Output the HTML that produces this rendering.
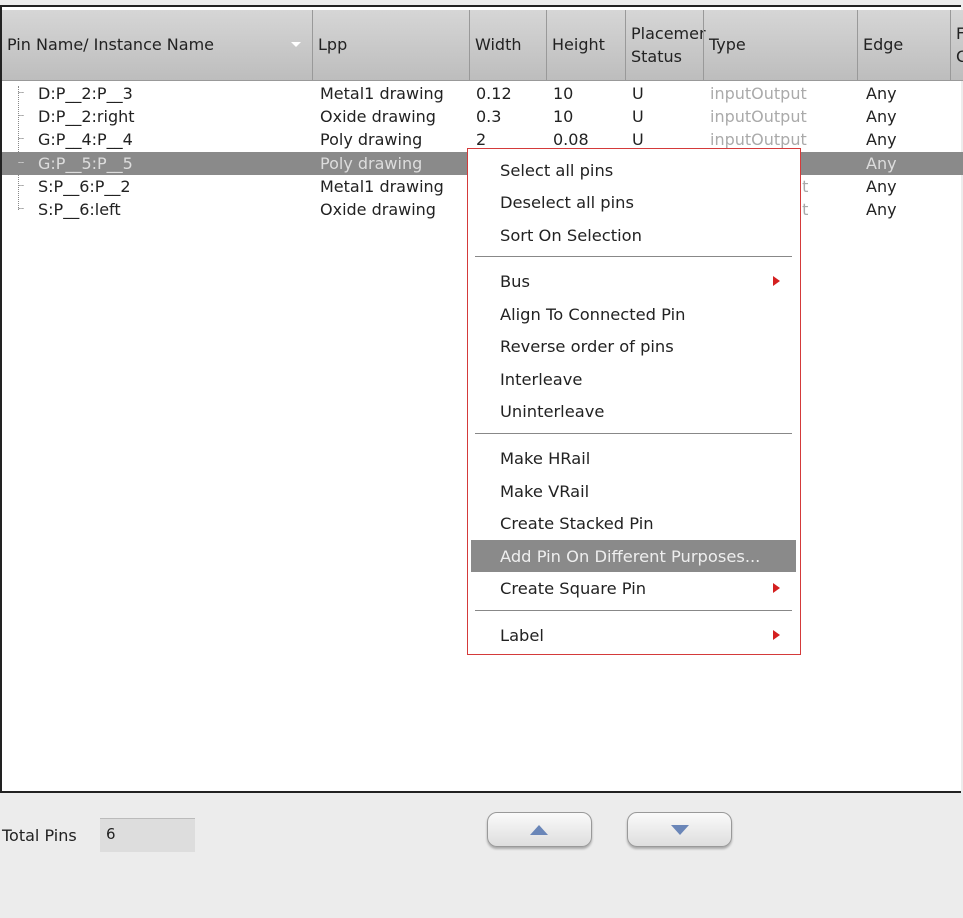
<!DOCTYPE html><html><head><style>
body{margin:0;width:963px;height:918px;background:#ececec;font-family:"DejaVu Sans","Liberation Sans",sans-serif;position:relative;overflow:hidden;font-size:16px;color:#222}
.a{position:absolute}
.tbl{left:0;top:5px;width:961px;height:788px;border:2px solid #222;border-right:none;background:#fff;box-sizing:border-box}
.hdr{left:2px;top:10px;width:961px;height:70px;background:linear-gradient(#d6d6d6,#bdbdbd);border-bottom:1px solid #999}
.hc{position:absolute;top:10px;height:70px;border-left:1px solid #999;box-sizing:border-box;padding-left:5px;line-height:70px;font-size:16px}
.r{position:absolute;left:2px;width:961px;height:23px;line-height:23px}
.r span{position:absolute;white-space:nowrap}
.sel{background:#8a8a8a;color:#ddd}
.g{color:#aaa}
.menu{left:467px;top:148px;width:334px;height:507px;background:#fff;border:1.5px solid #d43a3a;box-sizing:border-box}
.mi{position:absolute;left:32px;font-size:16.3px;white-space:nowrap}
.sep{position:absolute;left:7px;width:317px;height:1px;background:#888}
.arr{position:absolute;left:305px;width:0;height:0;border-top:5px solid transparent;border-bottom:5px solid transparent;border-left:7px solid #d42020}
.btn{top:812px;width:105px;height:35px;border:1px solid #999;border-radius:10px;background:linear-gradient(#fafafa,#dedede);box-shadow:0 2px 2px #aaa;box-sizing:border-box}
</style></head><body>
<div class="a tbl"></div>
<div class="a hdr"></div>
<div class="hc" style="left:2px;width:310px;border:none">Pin Name/ Instance Name</div>
<div class="a" style="left:291px;top:42px;border-left:5px solid transparent;border-right:5px solid transparent;border-top:5px solid #fff"></div>
<div class="hc" style="left:312px;width:157px">Lpp</div>
<div class="hc" style="left:469px;width:77px">Width</div>
<div class="hc" style="left:546px;width:79px">Height</div>
<div class="hc" style="left:625px;width:78px;line-height:23px;padding-top:12px">Placemer<br>Status</div>
<div class="hc" style="left:703px;width:154px">Type</div>
<div class="hc" style="left:857px;width:93px">Edge</div>
<div class="hc" style="left:950px;width:13px;line-height:23px;padding-top:12px">F<br>C</div>
<div class="a" style="left:18px;top:86px;height:124px;border-left:1px dotted #888"></div>
<div class="r" style="top:82px"><span style="left:16px;color:#888;font-size:10px">┄</span><span style="left:36px">D:P__2:P__3</span><span style="left:318px">Metal1 drawing</span><span style="left:474px">0.12</span><span style="left:551px">10</span><span style="left:630px">U</span><span class="g" style="left:708px">inputOutput</span><span style="left:864px">Any</span></div>
<div class="r" style="top:105px"><span style="left:16px;color:#888;font-size:10px">┄</span><span style="left:36px">D:P__2:right</span><span style="left:318px">Oxide drawing</span><span style="left:474px">0.3</span><span style="left:551px">10</span><span style="left:630px">U</span><span class="g" style="left:708px">inputOutput</span><span style="left:864px">Any</span></div>
<div class="r" style="top:128px"><span style="left:16px;color:#888;font-size:10px">┄</span><span style="left:36px">G:P__4:P__4</span><span style="left:318px">Poly drawing</span><span style="left:474px">2</span><span style="left:551px">0.08</span><span style="left:630px">U</span><span class="g" style="left:708px">inputOutput</span><span style="left:864px">Any</span></div>
<div class="r sel" style="top:152px"><span style="left:16px;font-size:10px">┄</span><span style="left:36px">G:P__5:P__5</span><span style="left:318px">Poly drawing</span><span style="left:864px">Any</span></div>
<div class="r" style="top:175px"><span style="left:16px;color:#888;font-size:10px">┄</span><span style="left:36px">S:P__6:P__2</span><span style="left:318px">Metal1 drawing</span><span class="g" style="left:790px">ut</span><span style="left:864px">Any</span></div>
<div class="r" style="top:198px"><span style="left:16px;color:#888;font-size:10px">┄</span><span style="left:36px">S:P__6:left</span><span style="left:318px">Oxide drawing</span><span class="g" style="left:790px">ut</span><span style="left:864px">Any</span></div>
<div class="a menu">
<div class="mi" style="top:12px">Select all pins</div>
<div class="mi" style="top:44px">Deselect all pins</div>
<div class="mi" style="top:77px">Sort On Selection</div>
<div class="sep" style="top:107px"></div>
<div class="mi" style="top:123px">Bus</div><div class="arr" style="top:127px"></div>
<div class="mi" style="top:156px">Align To Connected Pin</div>
<div class="mi" style="top:188px">Reverse order of pins</div>
<div class="mi" style="top:221px">Interleave</div>
<div class="mi" style="top:253px">Uninterleave</div>
<div class="sep" style="top:284px"></div>
<div class="mi" style="top:300px">Make HRail</div>
<div class="mi" style="top:333px">Make VRail</div>
<div class="mi" style="top:365px">Create Stacked Pin</div>
<div class="a" style="left:3px;top:391px;width:325px;height:32px;background:#8a8a8a"></div>
<div class="mi" style="top:398px;color:#eee">Add Pin On Different Purposes...</div>
<div class="mi" style="top:430px">Create Square Pin</div><div class="arr" style="top:434px"></div>
<div class="sep" style="top:461px"></div>
<div class="mi" style="top:477px">Label</div><div class="arr" style="top:481px"></div>
</div>
<div class="a" style="left:2px;top:826px;font-size:16px">Total Pins</div>
<div class="a" style="left:100px;top:818px;width:95px;height:34px;background:#ddd;border-top:1px solid #bbb;box-sizing:border-box;padding:6px 6px;font-size:15px">6</div>
<div class="a btn" style="left:487px"><div class="a" style="left:42px;top:12px;border-left:9px solid transparent;border-right:9px solid transparent;border-bottom:10px solid #6a86b8"></div></div>
<div class="a btn" style="left:627px"><div class="a" style="left:43px;top:12px;border-left:9px solid transparent;border-right:9px solid transparent;border-top:10px solid #6a86b8"></div></div>
</body></html>
